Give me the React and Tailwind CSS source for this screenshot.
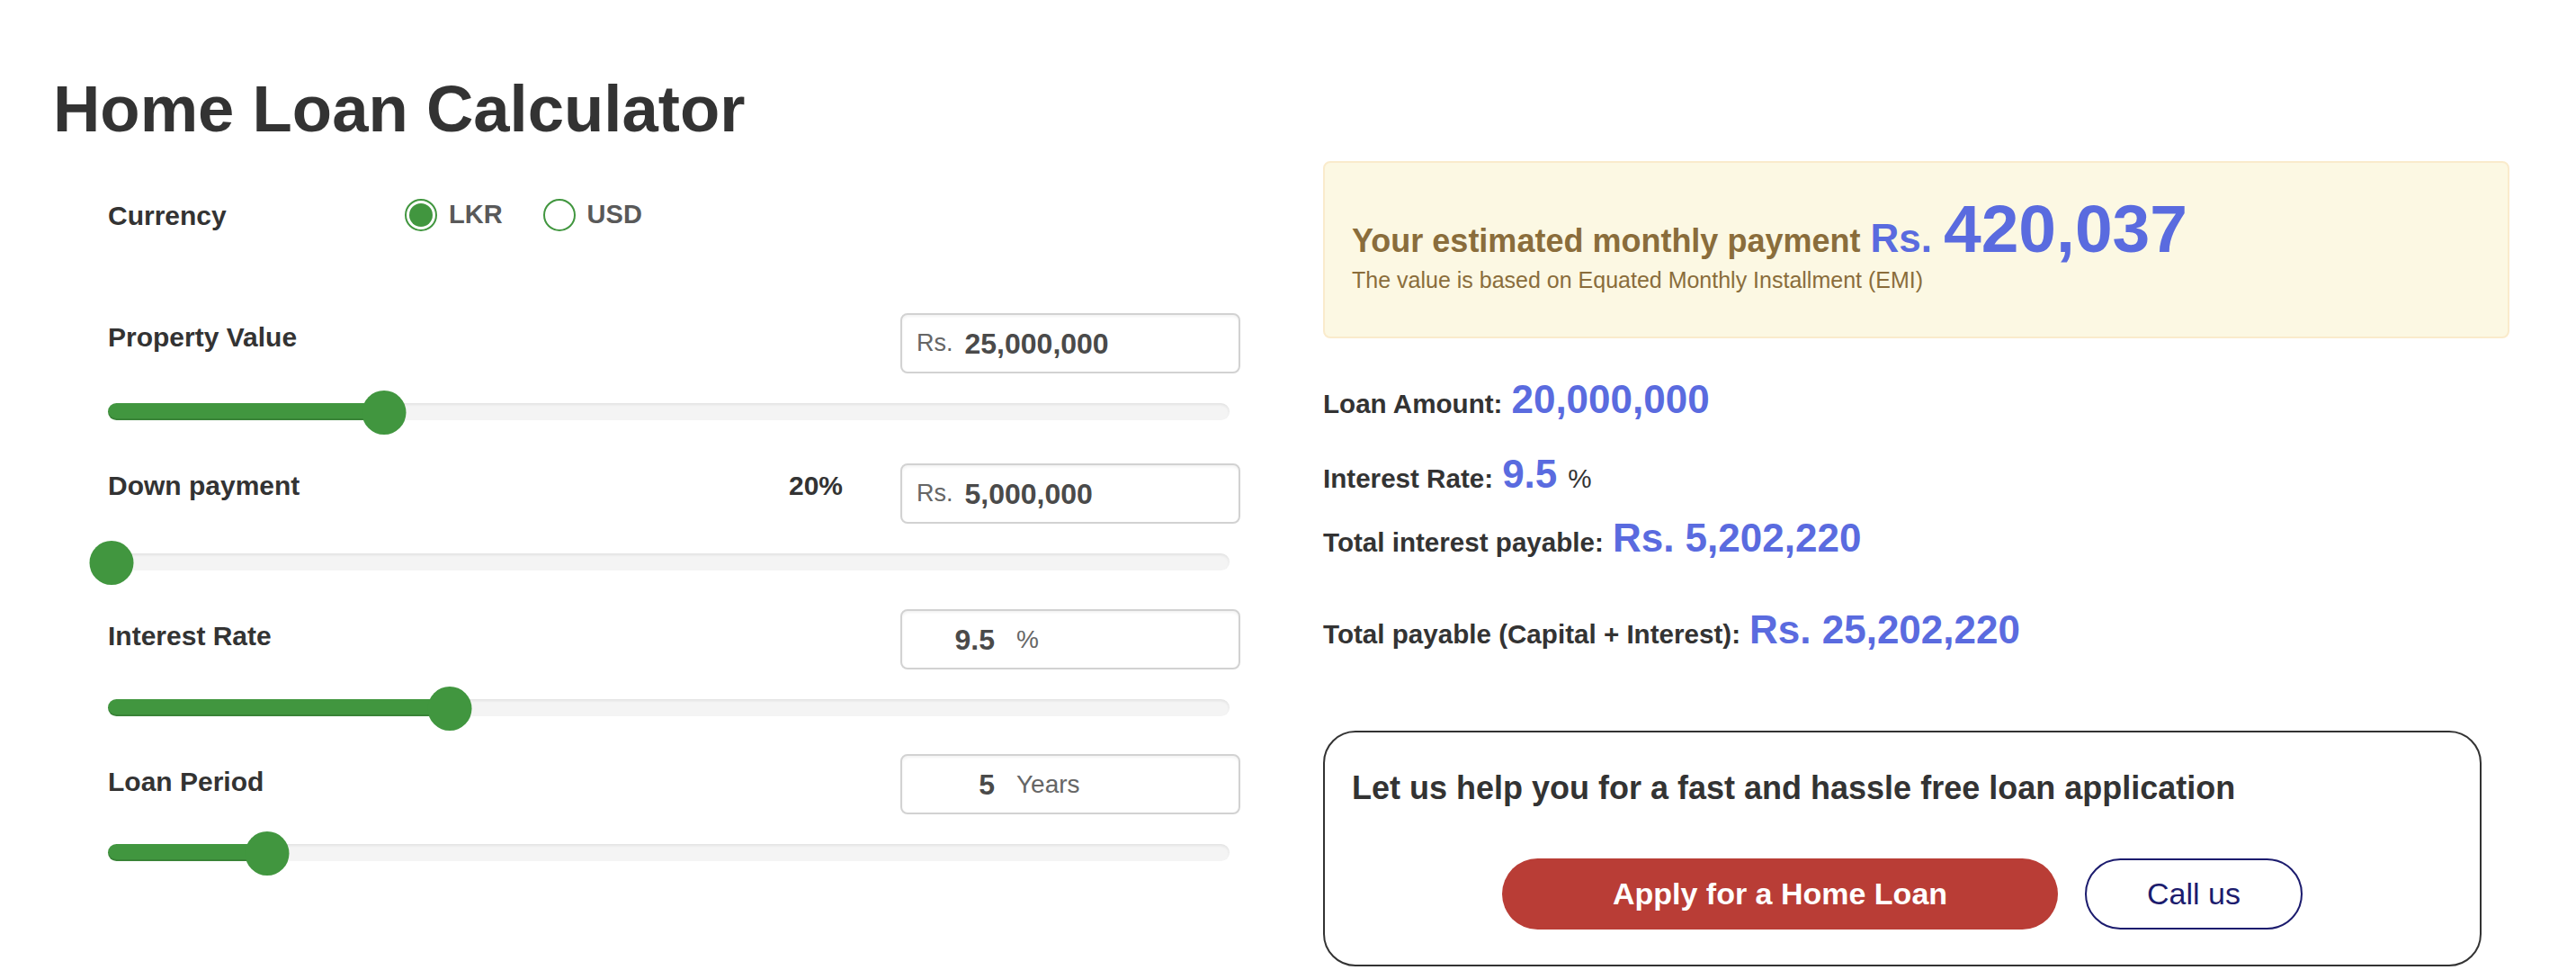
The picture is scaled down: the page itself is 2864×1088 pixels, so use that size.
import React from "react";

const BLUE = "text-[#5a6bdf]";

// slider rows: pos is the thumb position along the track, in percent
const rows = [
  { label: "Property Value", prefix: "Rs.", value: "25,000,000", pos: 24.6, rowGap: "mt-[89px]", labelGap: "mt-[7px]" },
  { label: "Down payment", prefix: "Rs.", value: "5,000,000", share: "20%", pos: 0.3, rowGap: "mt-[32px]", labelGap: "mt-[5px]" },
  { label: "Interest Rate", value: "9.5", unit: "%", pos: 30.5, rowGap: "mt-[27px]", labelGap: "mt-[10px]" },
  { label: "Loan Period", value: "5", unit: "Years", pos: 14.2, rowGap: "mt-[26px]", labelGap: "mt-[11px]" },
];

function Radio({ label, checked }) {
  return (
    <label className="flex items-center">
      <span className="flex h-[36px] w-[36px] items-center justify-center rounded-full border-2 border-[#41963f] bg-white">
        {checked && <span className="h-[26px] w-[26px] rounded-full bg-[#41963f]" />}
      </span>
      <span className="ml-[13px] text-[29px] font-bold text-[#595959]">{label}</span>
    </label>
  );
}

function ValueBox({ prefix, value, unit }) {
  return (
    <div className="flex h-[67px] w-[378px] items-center rounded-[8px] border-2 border-[#d2d2d2] bg-white pl-[16px] shadow-[inset_0_2px_3px_rgba(0,0,0,0.05)]">
      {prefix ? (
        <>
          <span className="text-[27px] text-[#666]">{prefix}</span>
          <span className="ml-[13px] text-[32px] font-bold text-[#4a4a4a]">{value}</span>
        </>
      ) : (
        <>
          <span className="w-[87px] text-right text-[32px] font-bold text-[#4a4a4a]">{value}</span>
          <span className="ml-[24px] text-[28px] text-[#666]">{unit}</span>
        </>
      )}
    </div>
  );
}

function Slider({ pos }) {
  return (
    <div className="relative mt-[19px] h-[49px] w-[1247px]">
      <div className="absolute left-0 right-0 top-[14px] h-[19px] rounded-full bg-[#f4f4f4] shadow-[inset_0_2px_3px_rgba(0,0,0,0.07)]" />
      <div
        className="absolute left-0 top-[14px] h-[19px] rounded-full bg-[#41963f] shadow-[inset_0_-2px_0_rgba(0,0,0,0.12)]"
        style={{ width: `${pos}%` }}
      />
      <div
        className="absolute top-0 h-[49px] w-[49px] -translate-x-1/2 rounded-full bg-[#41963f]"
        style={{ left: `${pos}%` }}
      />
    </div>
  );
}

function SliderRow({ row }) {
  return (
    <div className={row.rowGap}>
      <div className="flex w-[1259px] items-start justify-between">
        <span className={`${row.labelGap} text-[30px] font-bold leading-[40px]`}>{row.label}</span>
        <div className="flex items-start">
          {row.share && (
            <span className="mr-[64px] mt-[5px] text-[30px] font-bold leading-[40px]">{row.share}</span>
          )}
          <ValueBox prefix={row.prefix} value={row.value} unit={row.unit} />
        </div>
      </div>
      <Slider pos={row.pos} />
    </div>
  );
}

function Stat({ label, value, suffix, gap }) {
  return (
    <div className={`${gap} flex items-baseline leading-none`}>
      <span className="text-[29.6px] font-bold">{label}</span>
      <span className={`ml-[10px] text-[44px] font-bold ${BLUE}`}>{value}</span>
      {suffix && <span className="ml-[12px] text-[29.6px]">{suffix}</span>}
    </div>
  );
}

export default function App() {
  return (
    <div className="min-h-screen bg-white font-['Liberation_Sans',Arial,sans-serif] text-[#333]">
      <div className="flex pt-[85px]">
        {/* inputs */}
        <div className="w-[1471px] shrink-0">
          <h1 className="pl-[59px] text-[72.5px] font-bold leading-[72px]">Home Loan Calculator</h1>
          <div className="pl-[120px]">
            <div className="mt-[62px] flex h-[40px] items-center">
              <span className="w-[330px] text-[30px] font-bold">Currency</span>
              <Radio label="LKR" checked />
              <div className="ml-[45px]">
                <Radio label="USD" />
              </div>
            </div>
            {rows.map((row) => (
              <SliderRow key={row.label} row={row} />
            ))}
          </div>
        </div>

        {/* results */}
        <div className="w-[1319px] shrink-0 pt-[94px]">
          <div className="h-[197px] rounded-[8px] border-2 border-[#faebcc] bg-[#fcf8e3] px-[30px] pt-[36px] text-[#8a6d3b]">
            <div className="flex items-baseline leading-none">
              <span className="text-[36px] font-bold">Your estimated monthly payment</span>
              <span className={`ml-[11px] text-[44px] font-bold ${BLUE}`}>Rs.</span>
              <span className={`ml-[13px] text-[75px] font-bold ${BLUE}`}>420,037</span>
            </div>
            <p className="mt-[7px] text-[25px] leading-none">
              The value is based on Equated Monthly Installment (EMI)
            </p>
          </div>

          <Stat gap="mt-[46px]" label="Loan Amount:" value="20,000,000" />
          <Stat gap="mt-[39px]" label="Interest Rate:" value="9.5" suffix="%" />
          <Stat gap="mt-[27px]" label="Total interest payable:" value="Rs. 5,202,220" />
          <Stat gap="mt-[58px]" label="Total payable (Capital + Interest):" value="Rs. 25,202,220" />

          <div className="mt-[90px] h-[262px] w-[1288px] rounded-[36px] border-2 border-[#333] px-[30px] pt-[44px]">
            <h2 className="text-[36px] font-bold leading-none">
              Let us help you for a fast and hassle free loan application
            </h2>
            <div className="mt-[60px] flex justify-center gap-[30px]">
              <button className="h-[79px] w-[618px] rounded-full bg-[#b93d36] text-[34px] font-bold text-white">
                Apply for a Home Loan
              </button>
              <button className="h-[79px] w-[242px] rounded-full border-2 border-[#1c1c6e] bg-white text-[34px] text-[#1c1c6e]">
                Call us
              </button>
            </div>
          </div>
        </div>
      </div>
    </div>
  );
}
